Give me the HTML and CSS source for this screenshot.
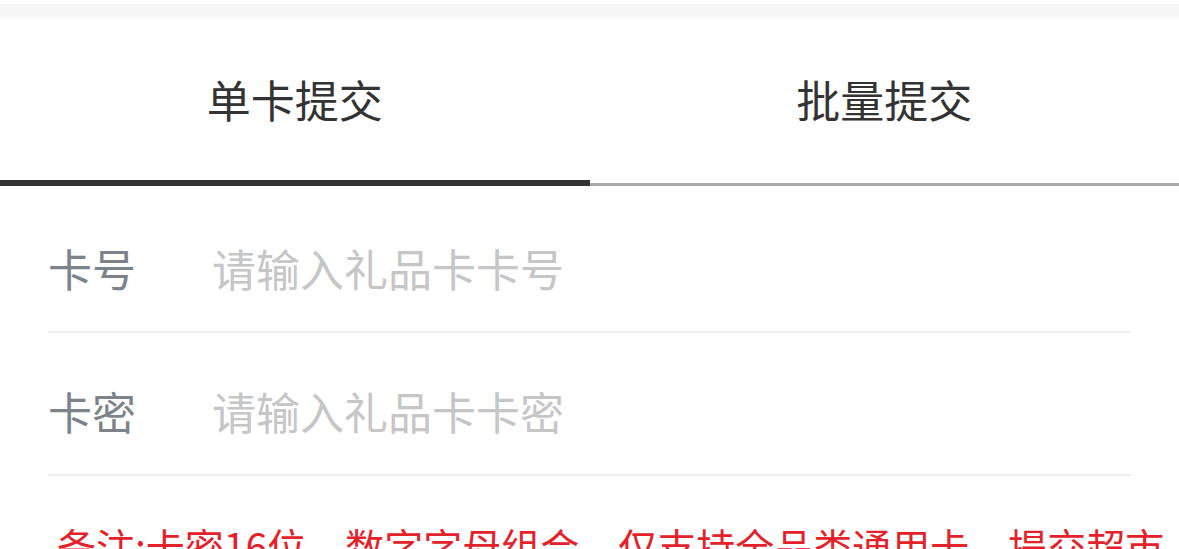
FILE: index.html
```html
<!DOCTYPE html>
<html>
    <head>
        <title>礼品卡提交</title>
        <link rel="stylesheet" href="styles.css">
    </head>
    <body>
        <div class="top-gap"></div>
        <div class="tabs">
            <div class="tab active">单卡提交</div>
            <div class="tab">批量提交</div>
        </div>
        <form class="card-form">
            <div class="form-row">
                <label for="cardNo">卡号</label>
                <input type="text" id="cardNo" placeholder="请输入礼品卡卡号" autocomplete="off"/>
            </div>
            <div class="form-row">
                <label for="cardPwd">卡密</label>
                <input type="text" id="cardPwd" placeholder="请输入礼品卡卡密" autocomplete="off"/>
            </div>
        </form>
        <p class="note">备注:卡密16位，数字字母组合，仅支持全品类通用卡，提交超市卡将无法处理，请仔细核对后再提交。</p>
    </body>
</html>
```

FILE: styles.css
```css
body {
    margin: 0;
    padding: 0;
    background-color: #fff;
    font-family: "Noto Sans CJK SC", "Noto Sans", sans-serif;
}
.top-gap {
    margin-top: 4px;
    height: 14px;
    background-color: #f7f7f7;
}
.tabs {
    display: flex;
}
.tab {
    flex: 1;
    height: 168px;
    box-sizing: border-box;
    display: flex;
    align-items: center;
    justify-content: center;
    font-size: 44px;
    color: #333;
    border-bottom: 3px solid #aaa;
    padding-bottom: 4px;
}
.tab.active {
    border-bottom: 6px solid #333;
    padding-bottom: 1px;
}
.card-form {
    margin: 4px 48px 0;
}
.form-row {
    display: flex;
    align-items: center;
    height: 126px;
    padding-top: 15px;
    border-bottom: 2px solid #eee;
}
.form-row label {
    width: 164px;
    font-size: 44px;
    color: #7c838b;
}
.form-row input {
    flex: 1;
    border: none;
    outline: none;
    padding: 0;
    font-family: inherit;
    font-size: 44px;
    color: #333;
    background: transparent;
}
.form-row input::placeholder {
    color: #c6c6c6;
}
.note {
    margin: 41px 12px 0 57px;
    font-size: 39px;
    line-height: 57px;
    color: #e3222b;
}
```
